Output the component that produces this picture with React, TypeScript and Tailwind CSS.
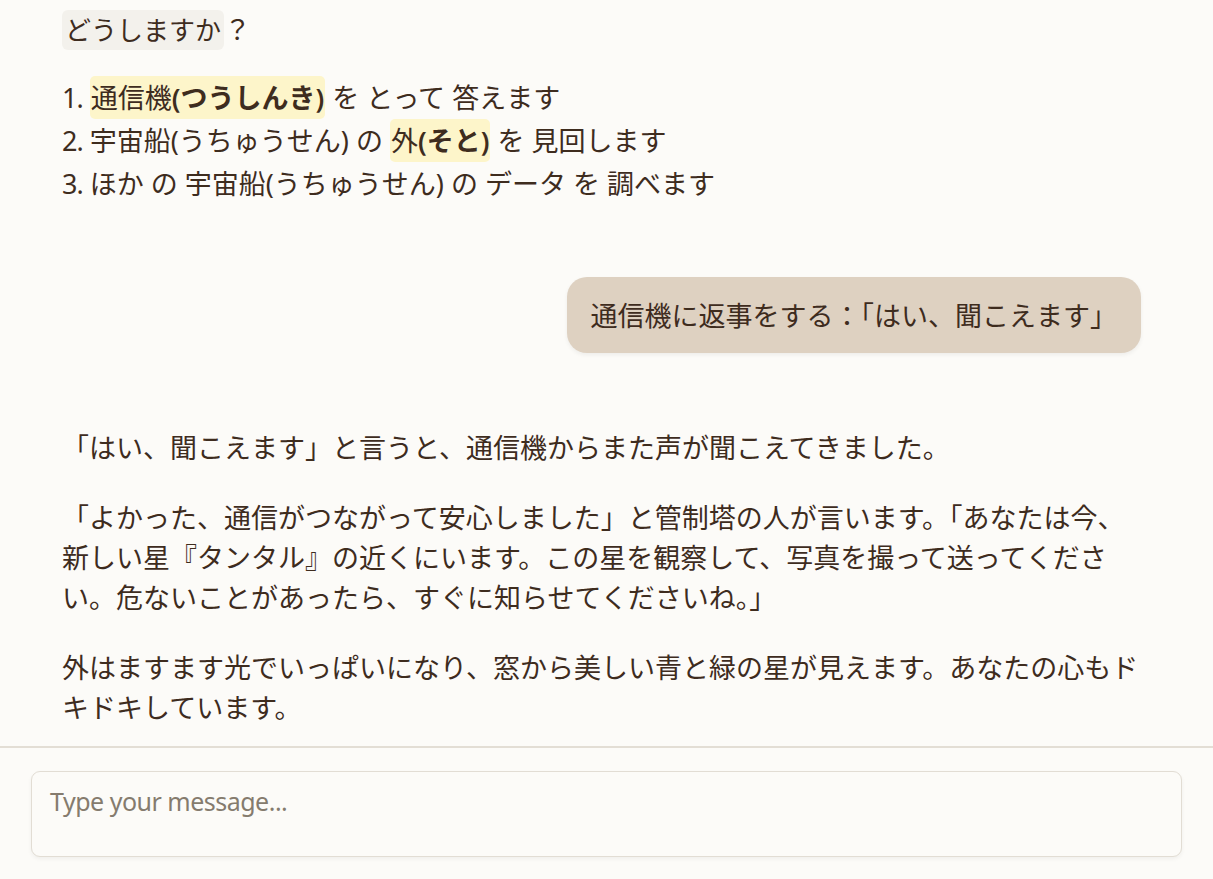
export default function App() {
  const font = { fontFamily: '"Noto Sans", "Noto Sans CJK JP", sans-serif' };

  return (
    <div
      className="flex h-[879px] w-full flex-col overflow-hidden bg-[#fcfbf8] text-[#3e2c1e]"
      style={font}
    >
      {/* conversation */}
      <div className="flex-1 overflow-hidden">
        <div className="ml-[62px] w-[1079px] pt-[10px] text-[27px] leading-[40px]">
          <p>
            <span className="rounded-[6px] bg-[#f3f1ec] px-[3px] py-[2px] text-[26px]">どうしますか</span>？
          </p>

          <ol className="mt-[26px] leading-[43px]">
            <li>
              <span className="tracking-[-1px]">1.</span>{" "}
              <mark className="rounded-[5px] bg-[#fdf5ca] px-[1px] py-[3px] text-[#3e2c1e]">
                通信機<span className="font-semibold">(つうしんき)</span>
              </mark>{" "}
              を とって 答えます
            </li>
            <li>
              <span className="tracking-[-1px]">2.</span> 宇宙船(うちゅうせん) の{" "}
              <mark className="rounded-[5px] bg-[#fdf5ca] px-[1px] py-[3px] text-[#3e2c1e]">
                外<span className="font-semibold">(そと)</span>
              </mark>{" "}
              を 見回します
            </li>
            <li>
              <span className="tracking-[-1px]">3.</span> ほか の 宇宙船(うちゅうせん) の データ を 調べます
            </li>
          </ol>

          <div className="mt-[72px] flex justify-end">
            <div className="rounded-[20px] bg-[#ded1c1] px-6 pt-[19px] pb-[17px] shadow-[0_2px_4px_rgba(0,0,0,0.06)]">
              通信機に返事をする：「はい、聞こえます」
            </div>
          </div>

          <div className="mt-[75px] space-y-[30px]">
            <p>「はい、聞こえます」と言うと、通信機からまた声が聞こえてきました。</p>
            <p>
              「よかった、通信がつながって安心しました」と管制塔の人が言います。「あなたは今、新しい星『タンタル』の近くにいます。この星を観察して、写真を撮って送ってください。危ないことがあったら、すぐに知らせてくださいね。」
            </p>
            <p>外はますます光でいっぱいになり、窓から美しい青と緑の星が見えます。あなたの心もドキドキしています。</p>
          </div>
        </div>
      </div>

      {/* composer */}
      <div className="border-t-2 border-[#e3ded5] px-[31px] pt-[23px] pb-[22px]">
        <textarea
          placeholder="Type your message..."
          className="block h-[86px] w-full resize-none rounded-[9px] border border-[#e2ddd4] bg-[#fcfbf8] px-[18px] py-[12px] text-[25px] leading-[34px] tracking-[-0.5px] text-[#3e2c1e] shadow-[0_2px_4px_rgba(0,0,0,0.05)] outline-none placeholder:text-[#857b6e]"
          style={font}
        />
      </div>
    </div>
  );
}
